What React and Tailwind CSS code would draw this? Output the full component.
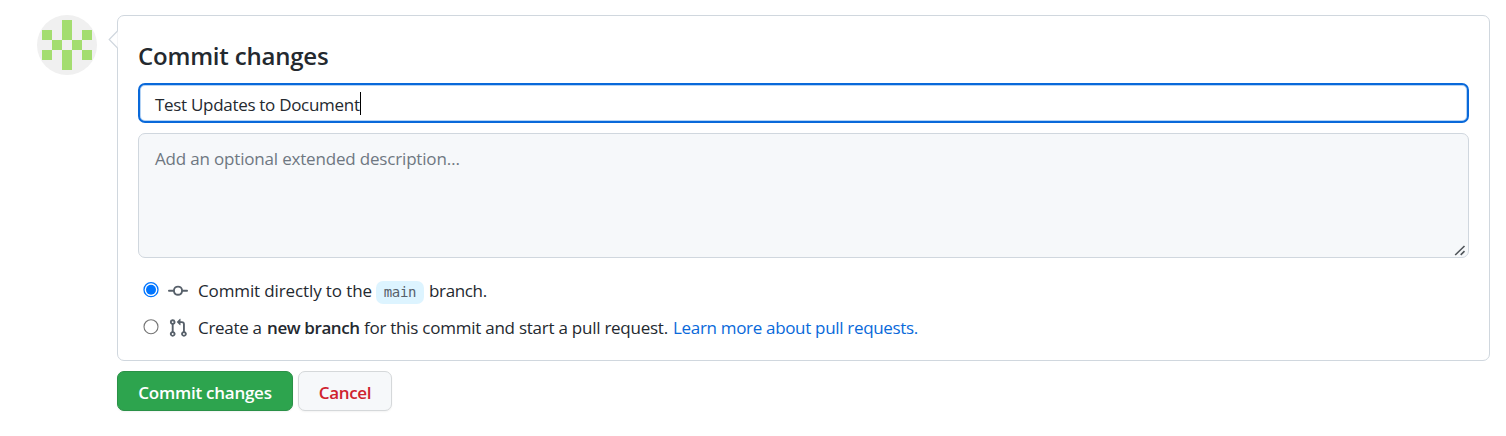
const cells = [[2, 0], [0, 1], [2, 1], [4, 1], [1, 2], [3, 2], [0, 3], [2, 3], [4, 3], [2, 4]];

function Avatar() {
  return (
    <svg className="size-[60px] shrink-0 rounded-full bg-[#f0f0f0]" viewBox="0 0 60 60" shapeRendering="crispEdges">
      {cells.map(([x, y]) => (
        <rect key={`${x}-${y}`} x={5 + x * 10} y={5 + y * 10} width="10" height="10" fill="#a4dd70" />
      ))}
    </svg>
  );
}

function CommitIcon() {
  return (
    <svg className="size-5 shrink-0 fill-[#57606a]" viewBox="0 0 16 16">
      <path fillRule="evenodd" d="M10.5 7.75a2.5 2.5 0 11-5 0 2.5 2.5 0 015 0zm1.43.75a4.002 4.002 0 01-7.86 0H.75a.75.75 0 110-1.5h3.32a4.001 4.001 0 017.86 0h3.32a.75.75 0 110 1.5h-3.32z" />
    </svg>
  );
}

function PullRequestIcon() {
  return (
    <svg className="size-5 shrink-0 fill-[#57606a]" viewBox="0 0 16 16">
      <path fillRule="evenodd" d="M7.177 3.073L9.573.677A.25.25 0 0110 .854v4.792a.25.25 0 01-.427.177L7.177 3.427a.25.25 0 010-.354zM3.75 2.5a.75.75 0 100 1.5.75.75 0 000-1.5zm-2.25.75a2.25 2.25 0 113 2.122v5.256a2.251 2.251 0 11-1.5 0V5.372A2.25 2.25 0 011.5 3.25zM11 2.5h-1V4h1a1 1 0 011 1v5.628a2.251 2.251 0 101.5 0V5A2.5 2.5 0 0011 2.5zm1 10.25a.75.75 0 111.5 0 .75.75 0 01-1.5 0zM3.75 12a.75.75 0 100 1.5.75.75 0 000-1.5z" />
    </svg>
  );
}

function Radio({ checked }) {
  return (
    <svg className="size-4 shrink-0" viewBox="0 0 16 16" role="radio" aria-checked={checked}>
      <circle cx="8" cy="7.7" r="7" fill="#fff" stroke={checked ? "#0075ff" : "#767676"} strokeWidth={checked ? 1.3 : 1.1} />
      {checked && <circle cx="8" cy="7.7" r="5" fill="#0075ff" />}
    </svg>
  );
}

export default function App() {
  return (
    <div className="h-[436px] w-[1506px] overflow-hidden bg-white pt-[15px] pl-[37px] font-['Open_Sans','Noto_Sans',sans-serif] text-[17px] text-[#24292f]">
      <div className="flex gap-5">
        <Avatar />
        <div className="w-[1373px]">
          <section className="relative h-[346px] rounded-[7px] border border-[#d0d7de] px-5 pt-[25px]">
            <svg className="absolute top-[14px] -left-[10px] h-[20px] w-[11px]" viewBox="0 0 11 20">
              <path d="M9.5 1L11 1V18L9.5 18Z" fill="#fff" />
              <path d="M9.5 1L1.2 9.5L9.5 18" fill="#fff" stroke="#d0d7de" strokeWidth="1.2" />
            </svg>
            <h2 className="h-[42px] text-[24px] leading-[30px] font-semibold tracking-[-0.2px] whitespace-nowrap">Commit changes</h2>
            <div className="flex h-10 items-center rounded-[7px] border-2 border-[#0969da] px-[15px] inset-ring inset-ring-[#b5d3f4]">
              <span className="pt-[3px] tracking-[-0.3px] whitespace-nowrap">Test Updates to Document</span>
              <span className="h-[23px] w-px bg-black" />
            </div>
            <div className="relative mt-[10px] h-[125px] rounded-[7px] border border-[#d0d7de] bg-[#f6f8fa] px-4 pt-[12px] leading-[26px] text-[#6e7781]">
              <span className="tracking-[-0.18px] whitespace-nowrap">Add an optional extended description…</span>
              <svg className="absolute right-[2px] bottom-[1px] size-[12px]" viewBox="0 0 12 12">
                <path d="M1.2 11L10.5 2M6.7 10.8L10.5 7.2" stroke="#50555a" strokeWidth="1.6" />
              </svg>
            </div>
            <div className="mt-[19px] flex h-7 items-center whitespace-nowrap">
              <div className="mr-[9px] ml-[5px] -mt-[3px] flex"><Radio checked /></div>
              <CommitIcon />
              <span className="ml-[10px] w-[174px] tracking-[-0.12px]">Commit directly to the</span>
              <code className="mt-[3px] ml-[4px] flex h-[23px] w-12 items-center justify-center rounded-[7px] bg-[#ddf4ff] font-['DejaVu_Sans_Mono',monospace] text-[14px] tracking-[-0.3px] text-[#57606a]">main</code>
              <span className="ml-[5px] tracking-[-0.35px]">branch.</span>
            </div>
            <div className="mt-[9px] flex h-7 items-center whitespace-nowrap">
              <div className="mr-[9px] ml-[5px] -mt-[3px] flex"><Radio checked={false} /></div>
              <PullRequestIcon />
              <span className="ml-[10px] w-[64px] tracking-[-0.3px]">Create a</span>
              <b className="ml-[5px] w-[93px] font-semibold tracking-[-0.4px]">new branch</b>
              <span className="ml-[4px] w-[304px] tracking-[-0.25px]">for this commit and start a pull request.</span>
              <a className="ml-[5px] tracking-[-0.32px] text-[#0969da]">Learn more about pull requests.</a>
            </div>
          </section>
          <div className="mt-[10px] flex gap-[5px] font-semibold">
            <button className="h-10 w-44 rounded-[7px] border border-[#2a9147] bg-[#2da44e] pt-[3px] tracking-[-0.25px] whitespace-nowrap text-white shadow-xs">Commit changes</button>
            <button className="h-10 w-[94px] rounded-[7px] border border-[#d5d8da] bg-[#f6f8fa] pt-[3px] tracking-[-0.3px] text-[#cf222e] shadow-xs">Cancel</button>
          </div>
        </div>
      </div>
    </div>
  );
}
